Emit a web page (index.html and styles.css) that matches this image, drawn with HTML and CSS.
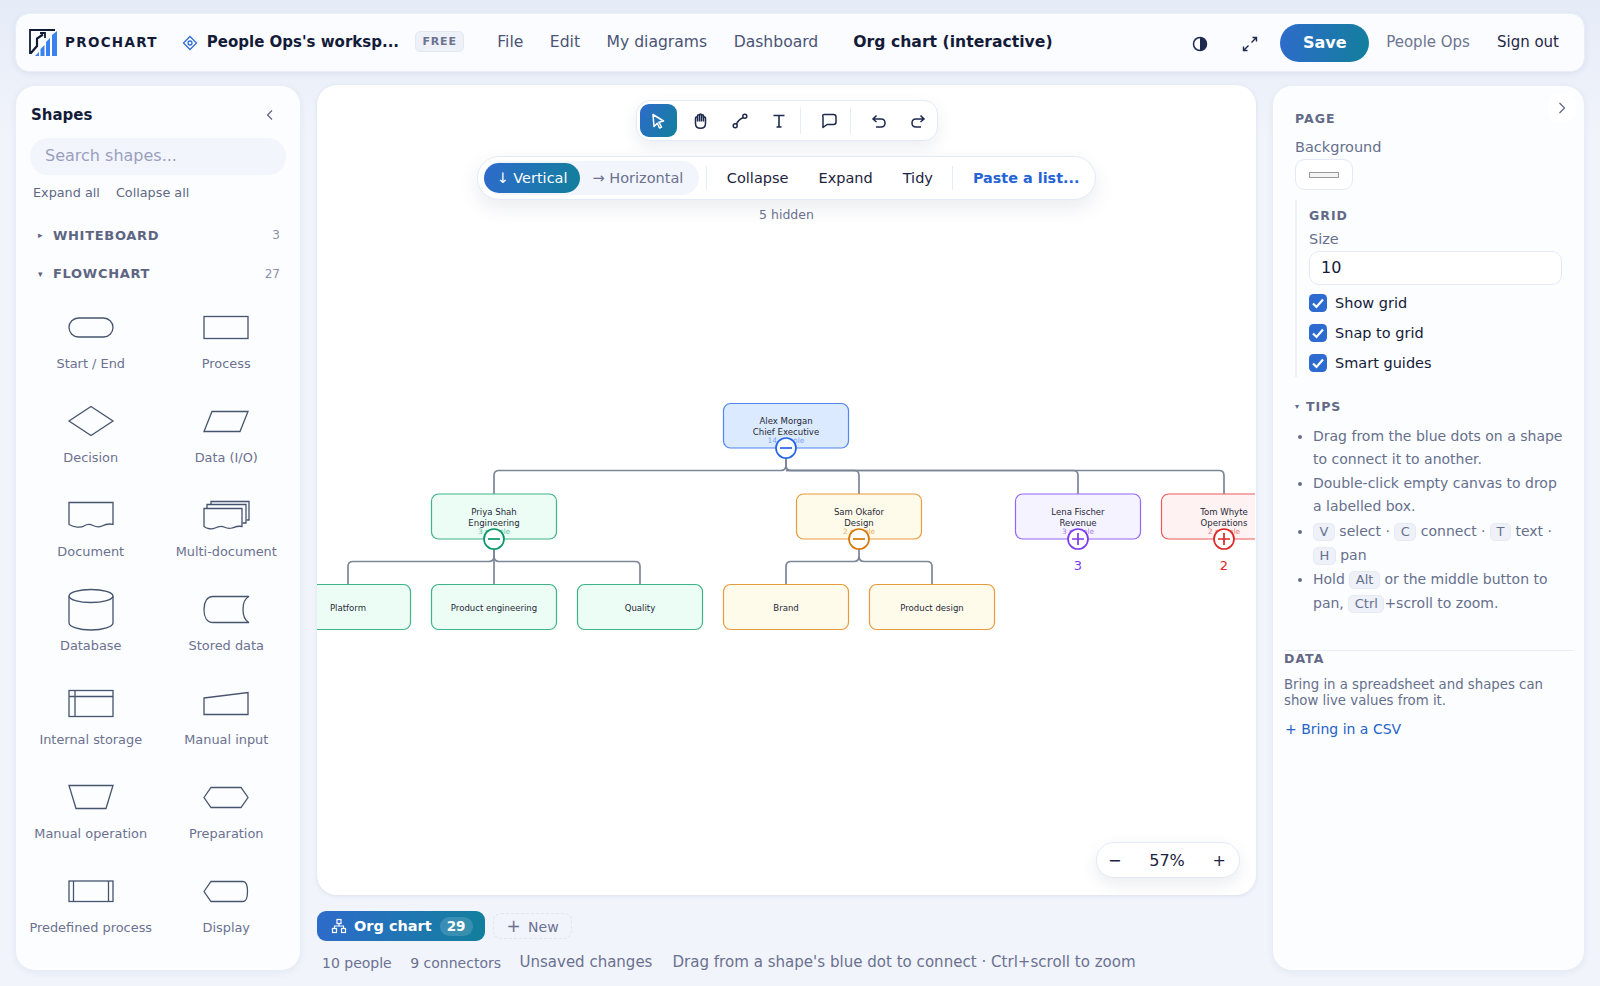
FILE: index.html
```html
<!DOCTYPE html>
<html>
<head>
    <title>Prochart - Org chart (interactive)</title>
    <link rel="stylesheet" href="styles.css">
</head>
<body>
    <header class="topbar">
        <svg class="logo" width="30" height="30" viewBox="0 0 30 30">
            <path d="M1 26V2H26" fill="none" stroke="#111a33" stroke-width="1.8"/>
            <path d="M1.500 25.500L8 18V10.500L14 6.500" fill="none" stroke="#111a33" stroke-width="2.200"/>
            <path d="M11 5H16V10" fill="none" stroke="#111a33" stroke-width="1.800"/>
            <path d="M6 28L10 24V28ZM11.500 28V21L15.500 17V28ZM17 28V14L21 10V28ZM23 28V7L28 3V28Z" fill="#3b82f0"/>
        </svg>
        <span class="brand">PROCHART</span>
        <svg class="ws-icon" width="16" height="16" viewBox="0 0 16 16" fill="none" stroke="#2e6bd6" stroke-width="1.3">
            <path d="M8 1.500L14.500 8L8 14.500L1.500 8Z"/><circle cx="8" cy="8" r="2"/>
        </svg>
        <span class="ws-name">People Ops's worksp...</span>
        <span class="chip">FREE</span>
        <nav class="menu">
            <a>File</a>
            <a>Edit</a>
            <a>My diagrams</a>
            <a>Dashboard</a>
        </nav>
        <span class="doc-title">Org chart (interactive)</span>
        <div class="top-right">
            <svg class="top-icon" width="16" height="16" viewBox="0 0 16 16">
                <circle cx="8" cy="8" r="6.500" fill="none" stroke="#1d2a4d" stroke-width="1.500"/>
                <path d="M8 1.500a6.500 6.500 0 0 1 0 13Z" fill="#1d2a4d"/>
            </svg>
            <svg class="top-icon expand" width="16" height="16" viewBox="0 0 16 16" fill="none" stroke="#1d2a4d" stroke-width="1.400">
                <path d="M9.500 6.500L14.500 1.500M10.500 1.500H14.500V5.500M6.500 9.500L1.500 14.500M1.500 10.500V14.500H5.500"/>
            </svg>
            <button class="save">Save</button>
            <span class="user">People Ops</span>
            <span class="signout">Sign out</span>
        </div>
    </header>

    <div class="workspace">
        <aside class="panel shapes">
            <div class="shapes-head">
                <h3>Shapes</h3>
                <svg width="10" height="12" viewBox="0 0 10 12" fill="none" stroke="#5c6480" stroke-width="1.200"><path d="M7 1.500L2.500 6L7 10.500"/></svg>
            </div>
            <div class="search">Search shapes...</div>
            <div class="links"><a>Expand all</a><a>Collapse all</a></div>
            <div class="group-row first"><span class="caret">&#9656;</span><b>WHITEBOARD</b><span class="count">3</span></div>
            <div class="group-row"><span class="caret">&#9662;</span><b>FLOWCHART</b><span class="count">27</span></div>
            <div class="shape-grid">
                <div class="shape"><svg viewBox="0 0 48 44"><rect x="2" y="13" width="44" height="19" rx="9.500"/></svg><span>Start / End</span></div>
                <div class="shape"><svg viewBox="0 0 48 44"><rect x="2" y="11.500" width="44" height="22"/></svg><span>Process</span></div>
                <div class="shape"><svg viewBox="0 0 48 44"><path d="M24 7.500L46 22L24 36.500L2 22Z"/></svg><span>Decision</span></div>
                <div class="shape"><svg viewBox="0 0 48 44"><path d="M10 12.500H46L38 32.500H2Z"/></svg><span>Data (I/O)</span></div>
                <div class="shape"><svg viewBox="0 0 48 44"><path d="M2 9.500H46V31.500C41 30 38 31.500 35 33S29 34 26 32.500 20 31 17 33 7 34.500 2 31.500Z"/></svg><span>Document</span></div>
                <div class="shape"><svg viewBox="0 0 48 44"><path d="M2 15.500H40V33.500C36 32.500 33 34 30 35S24 35 22 34 16 33.500 13 35 5 36 2 33.500Z"/><path d="M5 15V11.500H44V30H40.500"/><path d="M9 11V8.500H47V27H44.500"/></svg><span>Multi-document</span></div>
                <div class="shape"><svg viewBox="0 0 48 44"><ellipse cx="24" cy="9" rx="22" ry="6.500"/><path d="M2 9V36C2 39.500 12 43 24 43S46 39.500 46 36V9"/></svg><span>Database</span></div>
                <div class="shape"><svg viewBox="0 0 48 44"><path d="M47 9.500H11C5 9.500 2 15 2 22.500S5 35.500 11 35.500H47C42 33 41 28 41 22.500S42 12 47 9.500Z"/></svg><span>Stored data</span></div>
                <div class="shape"><svg viewBox="0 0 48 44"><rect x="2" y="9.500" width="44" height="26"/><path d="M2 15.500H46M8 9.500V35.500"/></svg><span>Internal storage</span></div>
                <div class="shape"><svg viewBox="0 0 48 44"><path d="M2 17L46 11.500V33.500H2Z"/></svg><span>Manual input</span></div>
                <div class="shape"><svg viewBox="0 0 48 44"><path d="M2 10.500H46L39 33.500H9Z"/></svg><span>Manual operation</span></div>
                <div class="shape"><svg viewBox="0 0 48 44"><path d="M2 22.500L9 12.500H39L46 22.500L39 32.500H9Z"/></svg><span>Preparation</span></div>
                <div class="shape"><svg viewBox="0 0 48 44"><rect x="2" y="12" width="44" height="20.500"/><path d="M6.500 12V32.500M41.500 12V32.500"/></svg><span>Predefined process</span></div>
                <div class="shape"><svg viewBox="0 0 48 44"><path d="M2 22.500L9 12.500H41Q45.500 12.500 45.500 22.500T41 32.500H9Z"/></svg><span>Display</span></div>
            </div>
        </aside>

        <main class="middle">
            <section class="canvas">
                <svg class="chart" viewBox="317 85 938 810">
                    <g class="links-g">
                        <path d="M786 448V465Q786 470.500 781 470.500H499Q494 470.500 494 475.500V494"/>
                        <path d="M786 448V465Q786 470.500 791 470.500H854Q859 470.500 859 475.500V494"/>
                        <path d="M786 470.500H1073Q1078 470.500 1078 475.500V494"/>
                        <path d="M786 470.500H1219Q1224 470.500 1224 475.500V494"/>
                        <path d="M494 539V556Q494 561.500 489 561.500H353Q348 561.500 348 566.500V584"/>
                        <path d="M494 539V584"/>
                        <path d="M494 556Q494 561.500 499 561.500H635Q640 561.500 640 566.500V584"/>
                        <path d="M859 539V556Q859 561.500 854 561.500H791Q786 561.500 786 566.500V584"/>
                        <path d="M859 556Q859 561.500 864 561.500H927Q932 561.500 932 566.500V584"/>
                    </g>

                    <g class="node blue">
                        <rect x="723.500" y="403.500" width="125" height="44.500" rx="7"/>
                        <text x="786" y="423.500">Alex Morgan</text>
                        <text x="786" y="434.500">Chief Executive</text>
                        <text class="sub" x="786" y="443">14 people</text>
                        <circle cx="786" cy="448" r="10"/>
                        <path class="sign" d="M780 448H792"/>
                    </g>
                    <g class="node green">
                        <rect x="431.500" y="494" width="125" height="45" rx="7"/>
                        <text x="494" y="514.500">Priya Shah</text>
                        <text x="494" y="525.500">Engineering</text>
                        <text class="sub" x="494" y="534">3 people</text>
                        <circle cx="494" cy="539" r="10"/>
                        <path class="sign" d="M488 539H500"/>
                    </g>
                    <g class="node amber">
                        <rect x="796.500" y="494" width="125" height="45" rx="7"/>
                        <text x="859" y="514.500">Sam Okafor</text>
                        <text x="859" y="525.500">Design</text>
                        <text class="sub" x="859" y="534">2 people</text>
                        <circle cx="859" cy="539" r="10"/>
                        <path class="sign" d="M853 539H865"/>
                    </g>
                    <g class="node purple">
                        <rect x="1015.500" y="494" width="125" height="45" rx="7"/>
                        <text x="1078" y="514.500">Lena Fischer</text>
                        <text x="1078" y="525.500">Revenue</text>
                        <text class="sub" x="1078" y="534">3 people</text>
                        <circle cx="1078" cy="539" r="10"/>
                        <path class="sign" d="M1072 539H1084M1078 533V545"/>
                        <text class="more" x="1078" y="570">3</text>
                    </g>
                    <g class="node red">
                        <rect x="1161.500" y="494" width="125" height="45" rx="7"/>
                        <text x="1224" y="514.500">Tom Whyte</text>
                        <text x="1224" y="525.500">Operations</text>
                        <text class="sub" x="1224" y="534">2 people</text>
                        <circle cx="1224" cy="539" r="10"/>
                        <path class="sign" d="M1218 539H1230M1224 533V545"/>
                        <text class="more" x="1224" y="570">2</text>
                    </g>

                    <g class="node green">
                        <rect x="285.500" y="584.500" width="125" height="45" rx="7"/>
                        <text x="348" y="610.500">Platform</text>
                        <rect x="431.500" y="584.500" width="125" height="45" rx="7"/>
                        <text x="494" y="610.500">Product engineering</text>
                        <rect x="577.500" y="584.500" width="125" height="45" rx="7"/>
                        <text x="640" y="610.500">Quality</text>
                    </g>
                    <g class="node amber">
                        <rect x="723.500" y="584.500" width="125" height="45" rx="7"/>
                        <text x="786" y="610.500">Brand</text>
                        <rect x="869.500" y="584.500" width="125" height="45" rx="7"/>
                        <text x="932" y="610.500">Product design</text>
                    </g>
                </svg>

                <div class="canvas-top">
                    <div class="toolbar">
                        <button class="tool active"><svg width="18" height="18" viewBox="0 0 18 18" fill="none" stroke="#fff" stroke-width="1.500" stroke-linejoin="round"><path d="M4 2.500L14.500 9L10 10.300L12.500 15L10.500 16L8.300 11.300L5 14.500Z"/></svg></button>
                        <button class="tool"><svg width="18" height="18" viewBox="0 0 18 18" fill="none" stroke="#1d2a4d" stroke-width="1.500" stroke-linejoin="round"><path d="M3.500 8V6a1 1 0 0 1 2 0V3.800a1 1 0 0 1 2 0V3a1 1 0 0 1 2 0v.8a1 1 0 0 1 2 0V6a1 1 0 0 1 2 0v5.500C13.500 14.500 11.500 16.300 8.500 16.300S3.500 14.500 3.500 11.500Z"/><path d="M5.500 6V9.500M7.500 3.800V9.500M9.500 3V9.500M11.500 3.800V9.500"/></svg></button>
                        <button class="tool"><svg width="18" height="18" viewBox="0 0 18 18" fill="none" stroke="#1d2a4d" stroke-width="1.500"><circle cx="4.200" cy="13.800" r="2"/><circle cx="13.800" cy="4.200" r="2"/><path d="M5.500 12.300C6.500 9 9 7 12.300 5.500"/></svg></button>
                        <button class="tool"><svg width="18" height="18" viewBox="0 0 18 18" fill="none" stroke="#1d2a4d" stroke-width="1.600"><path d="M3.500 3.500H14.500M9 3.500V15M6.500 15H11.500"/></svg></button>
                        <i class="sep"></i>
                        <button class="tool"><svg width="18" height="18" viewBox="0 0 18 18" fill="none" stroke="#1d2a4d" stroke-width="1.500" stroke-linejoin="round"><path d="M4.500 2.500H13.500Q16 2.500 16 5V10Q16 12.500 13.500 12.500H7L3 15.500V5Q2 2.500 4.500 2.500Z"/></svg></button>
                        <i class="sep"></i>
                        <button class="tool"><svg width="18" height="18" viewBox="0 0 18 18" fill="none" stroke="#1d2a4d" stroke-width="1.500"><path d="M6.500 3.500L3 7L6.500 10M3 7H11Q15 7 15 11T11 15H6"/></svg></button>
                        <button class="tool"><svg width="18" height="18" viewBox="0 0 18 18" fill="none" stroke="#1d2a4d" stroke-width="1.500"><path d="M11.500 3.500L15 7L11.500 10M15 7H7Q3 7 3 11T7 15H12"/></svg></button>
                    </div>
                    <div class="layoutbar">
                        <div class="segment">
                            <span class="seg on">↓ Vertical</span>
                            <span class="seg">→ Horizontal</span>
                        </div>
                        <i class="divider first"></i>
                        <a>Collapse</a>
                        <a>Expand</a>
                        <a>Tidy</a>
                        <i class="divider"></i>
                        <a class="paste">Paste a list...</a>
                    </div>
                    <div class="hidden-note">5 hidden</div>
                </div>

                <div class="zoombox">
                    <span>−</span>
                    <span class="pct">57%</span>
                    <span>+</span>
                </div>
            </section>

            <div class="tabs">
                <div class="tab">
                    <svg width="16" height="16" viewBox="0 0 16 16" fill="none" stroke="#fff" stroke-width="1.200"><rect x="6" y="1.500" width="4" height="4"/><rect x="1.500" y="10.500" width="4" height="4"/><rect x="10.500" y="10.500" width="4" height="4"/><path d="M8 5.500V8M3.500 10.500V8H12.500V10.500"/></svg>
                    <span>Org chart</span>
                    <em>29</em>
                </div>
                <div class="tab-new"><span class="plus">+</span> New</div>
            </div>
            <div class="status">
                <span class="small">10 people</span>
                <span class="small">9 connectors</span>
                <span>Unsaved changes</span>
                <span class="hint">Drag from a shape's blue dot to connect · Ctrl+scroll to zoom</span>
            </div>
        </main>

        <aside class="panel props">
            <button class="collapse-btn"><svg width="10" height="14" viewBox="0 0 10 14" fill="none" stroke="#5c6480" stroke-width="1.200"><path d="M2.500 2L7.500 7L2.500 12"/></svg></button>
            <div class="page-sec">
                <h4>PAGE</h4>
                <label class="field-label">Background</label>
                <div class="swatch"><i></i></div>
                <div class="grid-sec">
                    <h4>GRID</h4>
                    <label class="field-label">Size</label>
                    <div class="size-input">10</div>
                    <div class="check"><svg width="18" height="18" viewBox="0 0 18 18"><rect width="18" height="18" rx="4.500" fill="#2e6bd0"/><path d="M4 9.500L7.500 13L14 5.500" fill="none" stroke="#fff" stroke-width="2.200"/></svg>Show grid</div>
                    <div class="check"><svg width="18" height="18" viewBox="0 0 18 18"><rect width="18" height="18" rx="4.500" fill="#2e6bd0"/><path d="M4 9.500L7.500 13L14 5.500" fill="none" stroke="#fff" stroke-width="2.200"/></svg>Snap to grid</div>
                    <div class="check"><svg width="18" height="18" viewBox="0 0 18 18"><rect width="18" height="18" rx="4.500" fill="#2e6bd0"/><path d="M4 9.500L7.500 13L14 5.500" fill="none" stroke="#fff" stroke-width="2.200"/></svg>Smart guides</div>
                </div>
                <h4 class="tips-head"><span class="caret">&#9662;</span>TIPS</h4>
                <ul class="tips">
                    <li>Drag from the blue dots on a shape to connect it to another.</li>
                    <li>Double-click empty canvas to drop a labelled box.</li>
                    <li class="keys"><kbd>V</kbd> select · <kbd>C</kbd> connect · <kbd>T</kbd> text · <kbd>H</kbd> pan</li>
                    <li class="keys">Hold <kbd>Alt</kbd> or the middle button to pan, <kbd>Ctrl</kbd>+scroll to zoom.</li>
                </ul>
            </div>
            <div class="data-sec">
                <h4>DATA</h4>
                <p>Bring in a spreadsheet and shapes can show live values from it.</p>
                <a>+ Bring in a CSV</a>
            </div>
        </aside>
    </div>
</body>
</html>
```

FILE: styles.css
```css
* {
    box-sizing: border-box;
}
body {
    margin: 0;
    height: 986px;
    padding: 13px 15px 16px;
    overflow: hidden;
    font-family: "DejaVu Sans", sans-serif;
    color: #141b38;
    background: linear-gradient(180deg, #e5ebf7 0, #f1f4fb 14%);
    display: flex;
    flex-direction: column;
    gap: 13px;
}
h3, h4, p, ul {
    margin: 0;
}
button {
    font-family: inherit;
    border: 0;
    background: none;
    padding: 0;
}

/* top bar */
.topbar {
    height: 59px;
    flex: none;
    display: flex;
    align-items: center;
    padding: 0 25px 2px 13px;
    background: #fbfcff;
    border: 1px solid #e8edf7;
    border-radius: 14px;
    box-shadow: 0 2px 6px rgba(60, 80, 130, 0.08);
}
.logo {
    flex: none;
    margin-top: 2px;
}
.brand {
    margin-left: 6px;
    font-size: 13.5px;
    font-weight: bold;
    letter-spacing: 1.3px;
}
.ws-icon {
    margin-left: 24px;
    margin-top: 2px;
}
.ws-name {
    margin-left: 9px;
    font-size: 15px;
    font-weight: bold;
}
.chip {
    margin-left: 16px;
    padding: 3px 6.5px;
    font-size: 11px;
    font-weight: bold;
    letter-spacing: 0.8px;
    color: #6b7390;
    background: #eef1f8;
    border: 1px solid #e3e8f3;
    border-radius: 5px;
}
.menu {
    display: flex;
    gap: 26.5px;
    margin-left: 33px;
    font-size: 15.6px;
    color: #4a5474;
}
.doc-title {
    margin-left: 35px;
    font-size: 15.65px;
    font-weight: bold;
}
.top-right {
    margin-left: auto;
    display: flex;
    align-items: center;
    font-size: 15px;
}
.top-icon {
    margin-top: 5px;
}
.expand {
    margin-left: 34px;
}
.save {
    margin-left: 22px;
    margin-top: 2px;
    width: 89px;
    height: 38px;
    border-radius: 19px;
    color: #fff;
    font-size: 16px;
    font-weight: bold;
    background: linear-gradient(100deg, #2e6bcb, #127f9c);
}
.user {
    margin-left: 17px;
    color: #6d7590;
}
.signout {
    margin-left: 27px;
    color: #1f2746;
}

/* main columns */
.workspace {
    flex: 1;
    min-height: 0;
    display: grid;
    grid-template-columns: 286px 1fr 313px;
    gap: 16px;
}
.panel {
    background: #fcfdff;
    border: 1px solid #e8edf7;
    border-radius: 20px;
    box-shadow: 0 2px 6px rgba(60, 80, 130, 0.07);
}

/* shapes panel */
.shapes {
    padding: 19px 14px 0;
    overflow: hidden;
}
.shapes-head {
    display: flex;
    justify-content: space-between;
    align-items: center;
    padding: 0 11px 0 1px;
    height: 20px;
}
.shapes-head h3 {
    font-size: 15px;
}
.search {
    margin-top: 13px;
    height: 37px;
    line-height: 36px;
    padding-left: 15px;
    font-size: 16px;
    color: #9a9fbe;
    background: #f3f5fc;
    border-radius: 18px;
}
.links {
    display: flex;
    gap: 16px;
    margin: 9px 0 0 3px;
    font-size: 12.8px;
    line-height: 18px;
    color: #5f6885;
}
.group-row {
    display: flex;
    align-items: center;
    height: 20px;
    margin-top: 18.5px;
    padding-right: 6px;
    font-size: 13px;
    color: #5d6582;
}
.group-row.first {
    margin-top: 23px;
}
.group-row b {
    letter-spacing: 0.7px;
}
.caret {
    width: 14px;
    margin-left: 8px;
    margin-right: 1px;
    font-size: 9px;
}
.count {
    margin-left: auto;
    font-size: 12px;
    color: #8b91aa;
}
.shape-grid {
    display: grid;
    grid-template-columns: 135.5px 135.5px;
    grid-auto-rows: 94px;
    margin: 21.5px 0 0 -7px;
}
.shape {
    display: flex;
    flex-direction: column;
    align-items: center;
    gap: 6.5px;
    font-size: 12.9px;
    line-height: 16px;
    color: #6b7190;
}
.shape svg {
    width: 48px;
    height: 44px;
    fill: none;
    stroke: #46546d;
    stroke-width: 1.3;
}

/* canvas */
.middle {
    display: flex;
    flex-direction: column;
    min-width: 0;
}
.canvas {
    position: relative;
    height: 810px;
    flex: none;
    overflow: hidden;
    background: #fff;
    border-radius: 20px;
    box-shadow: 0 1px 4px rgba(60, 80, 130, 0.12);
}
.chart {
    position: absolute;
    left: 0;
    top: 0;
    width: 938px;
    height: 810px;
}
.links-g path {
    fill: none;
    stroke: #7d8698;
    stroke-width: 1.7;
}
.node text {
    font-size: 8.55px;
    text-anchor: middle;
    fill: #1f2937;
}
.node text.sub {
    font-size: 7.4px;
}
.node text.more {
    font-size: 13px;
}
.node rect {
    stroke-width: 1.2;
}
.node circle {
    fill: #fff;
    stroke-width: 1.7;
}
.node .sign {
    fill: none;
    stroke-width: 1.7;
}
.blue rect { fill: #dbeafe; stroke: #4f86ee; }
.blue circle, .blue .sign { stroke: #2563eb; }
.blue text.sub { fill: #7ea4f2; }
.green rect { fill: #ecfdf5; stroke: #3fb389; }
.green circle, .green .sign { stroke: #059669; }
.green text.sub { fill: #63c9a2; }
.amber rect { fill: #fffbeb; stroke: #ea9a3e; }
.amber circle, .amber .sign { stroke: #d97706; }
.amber text.sub { fill: #eead63; }
.purple rect { fill: #f5f3ff; stroke: #9566f6; }
.purple circle, .purple .sign { stroke: #7c3aed; }
.purple text.sub { fill: #ab82f4; }
.purple text.more { fill: #7c3aed; }
.red rect { fill: #fef2f2; stroke: #ee5a5a; }
.red circle, .red .sign { stroke: #dc2626; }
.red text.sub { fill: #ee7a7a; }
.red text.more { fill: #dc2626; }

.canvas-top {
    position: absolute;
    top: 15px;
    left: 0;
    right: 0;
    display: flex;
    flex-direction: column;
    align-items: center;
}
.toolbar {
    display: flex;
    align-items: center;
    width: 302px;
    height: 41px;
    padding: 0 3px;
    background: #fff;
    border: 1px solid #e3e9f6;
    border-radius: 14px;
    box-shadow: 0 6px 16px rgba(60, 70, 110, 0.09);
}
.tool {
    flex: none;
    width: 37px;
    height: 33px;
    margin-right: 2px;
    display: flex;
    align-items: center;
    justify-content: center;
    border-radius: 9px;
}
.tool.active {
    margin-right: 5.5px;
    background: linear-gradient(120deg, #2e6bcb, #127f9c);
}
.sep {
    flex: none;
    width: 1px;
    height: 27px;
    margin: 0 9px 0 1px;
    background: #e8ecf5;
}
.layoutbar {
    display: flex;
    align-items: center;
    width: 619px;
    height: 44px;
    margin-top: 15px;
    padding: 0 6px;
    font-size: 14.5px;
    white-space: nowrap;
    color: #1c2340;
    background: #fff;
    border: 1px solid #e3e9f6;
    border-radius: 22px;
    box-shadow: 0 8px 20px rgba(60, 70, 110, 0.1);
}
.layoutbar a + a {
    margin-left: 30px;
}
.layoutbar .paste {
    font-size: 14.4px;
    font-weight: bold;
    color: #2563d6;
}
.segment {
    display: flex;
    height: 34px;
    align-items: center;
    padding-right: 3px;
    background: #f3f5fc;
    border-radius: 17px;
}
.seg {
    height: 30px;
    line-height: 30px;
    padding: 0 12.5px;
    border-radius: 15px;
    color: #6a7290;
}
.seg.on {
    color: #fff;
    background: linear-gradient(100deg, #2e6bcb, #127f9c);
}
.divider {
    flex: none;
    width: 1px;
    height: 24px;
    margin: 0 19.5px;
    background: #e8ecf5;
}
.divider.first {
    margin: 0 20px 0 7px;
}
.hidden-note {
    margin-top: 7px;
    font-size: 12.5px;
    line-height: 15px;
    color: #6b7190;
}
.zoombox {
    position: absolute;
    right: 16px;
    bottom: 17px;
    width: 144px;
    height: 36px;
    display: flex;
    align-items: center;
    justify-content: space-between;
    padding: 0 13px 0 11px;
    font-size: 16px;
    color: #1c2340;
    background: #fff;
    border: 1px solid #e3e9f6;
    border-radius: 18px;
    box-shadow: 0 6px 16px rgba(60, 70, 110, 0.1);
}

/* sheet tabs and status */
.tabs {
    display: flex;
    align-items: center;
    margin-top: 16px;
    gap: 8px;
    height: 30px;
}
.tab {
    width: 168px;
    height: 30px;
    display: flex;
    align-items: center;
    padding-left: 14px;
    font-size: 14.5px;
    font-weight: bold;
    color: #fff;
    background: linear-gradient(100deg, #2e6bcb, #127f9c);
    border-radius: 9px;
}
.tab span {
    margin-left: 7px;
}
.tab em {
    margin-left: 8px;
    padding: 0 7px;
    font-style: normal;
    font-size: 13.5px;
    line-height: 19px;
    background: rgba(255, 255, 255, 0.15);
    border-radius: 10px;
}
.tab-new {
    width: 79px;
    height: 26px;
    line-height: 24px;
    text-align: center;
    font-size: 14px;
    color: #6b7190;
    border: 1px dashed #e0e5f1;
    border-radius: 8px;
}
.plus {
    font-size: 17px;
    margin-right: 3px;
}
.status {
    display: flex;
    align-items: center;
    gap: 18.5px;
    margin-top: 12px;
    padding-left: 5px;
    font-size: 15px;
    color: #6b7190;
}
.status .small {
    font-size: 14px;
    padding-top: 2px;
}
.status .hint {
    margin-left: 1.5px;
    font-size: 15.07px;
}

/* properties panel */
.props {
    position: relative;
    padding: 25px 11px 0;
    overflow: hidden;
}
.collapse-btn {
    position: absolute;
    top: 8px;
    right: 8px;
    width: 28px;
    height: 28px;
    display: flex;
    align-items: center;
    justify-content: center;
    background: #fff;
    border-radius: 9px;
}
.page-sec {
    padding-left: 11px;
}
.props h4 {
    font-size: 12.5px;
    line-height: 16px;
    letter-spacing: 1px;
    color: #626a88;
}
.field-label {
    display: block;
    margin-top: 11px;
    font-size: 14.5px;
    line-height: 18px;
    color: #66708c;
}
.swatch {
    width: 58px;
    height: 31px;
    margin-top: 3px;
    display: flex;
    align-items: center;
    justify-content: center;
    background: #fff;
    border: 1px solid #e3e9f6;
    border-radius: 10px;
}
.swatch i {
    width: 30px;
    height: 6px;
    background: #f4f4f4;
    border: 1px solid #999;
}
.grid-sec {
    margin-top: 10px;
    height: 177px;
    padding: 8px 0 0 12px;
    border-left: 2px solid #eef1f8;
}
.grid-sec .field-label {
    margin-top: 6px;
}
.size-input {
    width: 253px;
    height: 34px;
    margin-top: 3px;
    margin-bottom: 9px;
    padding-left: 11px;
    font-size: 16px;
    line-height: 32px;
    background: #fff;
    border: 1px solid #e3e9f6;
    border-radius: 10px;
}
.check {
    display: flex;
    align-items: center;
    gap: 8px;
    height: 18px;
    margin-bottom: 12px;
    font-size: 14.5px;
}
.tips-head {
    margin-top: 22px;
    display: flex;
    align-items: center;
}
.tips-head .caret {
    width: 8px;
    margin: 0 3px 0 0;
    font-size: 8px;
    letter-spacing: 0;
}
.tips {
    margin-top: 10px;
    padding-left: 18px;
    width: 270px;
    height: 192px;
    font-size: 14px;
    line-height: 23.4px;
    color: #66708c;
}
.tips .keys {
    line-height: 24px;
}
kbd {
    display: inline-block;
    font-family: inherit;
    font-size: 13px;
    line-height: 16px;
    padding: 0 5.5px;
    background: #eef1f8;
    border: 1px solid #e6eaf4;
    border-radius: 5px;
}
.data-sec {
    margin-top: 33px;
    border-top: 1px solid #e8ecf5;
    font-size: 13.3px;
    color: #66708c;
}
.data-sec h4 {
    line-height: 15px;
}
.data-sec p {
    margin-top: 11px;
    line-height: 16px;
}
.data-sec a {
    display: block;
    margin-top: 12px;
    margin-left: 1px;
    font-size: 14px;
    color: #2563c9;
}
```
